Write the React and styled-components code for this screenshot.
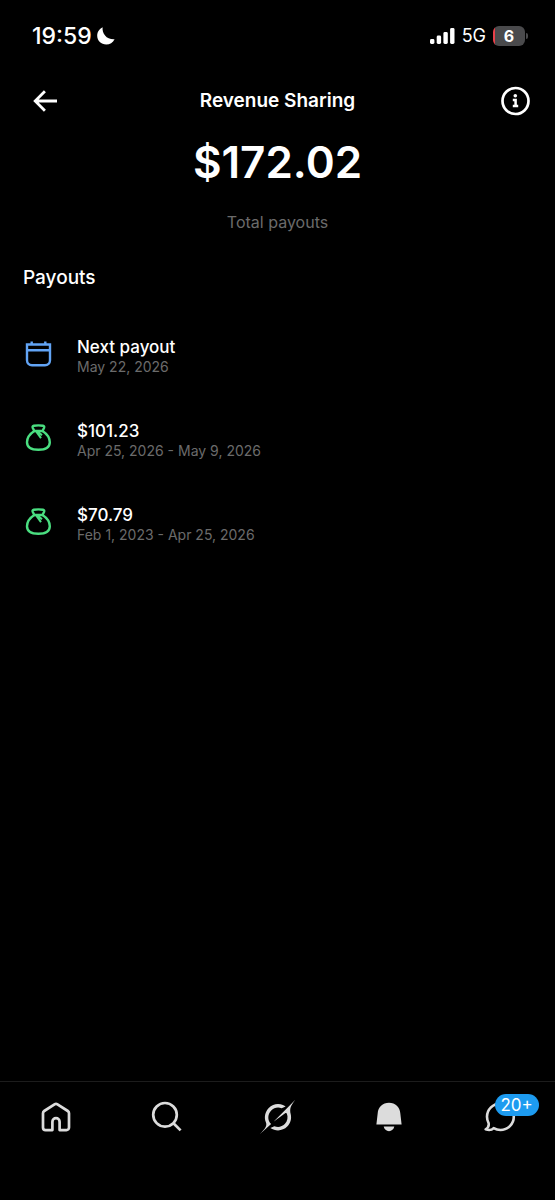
import styled, { createGlobalStyle } from "styled-components";

const GlobalStyle = createGlobalStyle`
  * {
    box-sizing: border-box;
  }
  body {
    margin: 0;
    background: #000;
    color: #fff;
    font-family: Inter, "Liberation Sans", sans-serif;
  }
`;

const Screen = styled.div`
  display: flex;
  flex-direction: column;
  min-height: 100vh;
`;

const StatusBar = styled.div`
  display: flex;
  align-items: center;
  justify-content: space-between;
  height: 72px;
  padding: 0 27px 0 32px;
`;

const StatusGroup = styled.div`
  display: flex;
  align-items: center;
  gap: ${(props) => props.$gap}px;
`;

const Clock = styled.span`
  font-size: 23px;
  font-weight: 500;
  line-height: 24px;
`;

const Network = styled.span`
  font-size: 18px;
  line-height: 24px;
`;

const Battery = styled.div`
  display: flex;
  align-items: center;
  gap: 1px;
`;

const BatteryBody = styled.div`
  width: 32px;
  height: 20px;
  border-radius: 6px;
  background: linear-gradient(to right, #e8404a 2px, #4a4a4c 2px);
  font-size: 16px;
  font-weight: 700;
  line-height: 20px;
  text-align: center;
`;

const BatteryTip = styled.div`
  width: 2px;
  height: 6px;
  border-radius: 0 2px 2px 0;
  background: #4a4a4c;
`;

const Header = styled.header`
  display: grid;
  grid-template-columns: 44px 1fr 44px;
  align-items: center;
  height: 58px;
  padding: 0 24px;
`;

const IconButton = styled.button`
  display: flex;
  align-items: center;
  justify-content: ${(props) => props.$align};
  width: 44px;
  height: 44px;
  padding: 0;
  border: 0;
  background: none;
  color: #fff;
  cursor: pointer;
`;

const Title = styled.h1`
  margin: 0;
  font-size: 19px;
  font-weight: 600;
  line-height: 24px;
  text-align: center;
`;

const Summary = styled.section`
  display: flex;
  flex-direction: column;
  align-items: center;
  gap: 22px;
  padding-top: 6px;
`;

const Amount = styled.strong`
  font-size: 44px;
  font-weight: 600;
  line-height: 52px;
`;

const AmountLabel = styled.span`
  color: #6b6b6b;
  font-size: 16px;
  line-height: 24px;
`;

const Section = styled.main`
  flex: 1;
  padding: 32px 23px;
`;

const SectionTitle = styled.h2`
  margin: 0 0 32px;
  font-size: 19px;
  font-weight: 500;
  line-height: 24px;
`;

const PayoutList = styled.ul`
  display: flex;
  flex-direction: column;
  gap: 20px;
  margin: 0;
  padding: 0;
  list-style: none;
`;

const PayoutRow = styled.li`
  display: flex;
  align-items: center;
  gap: 24px;
  height: 64px;
`;

const PayoutText = styled.div`
  display: flex;
  flex-direction: column;
  padding-top: 5px;
`;

const PayoutTitle = styled.span`
  font-size: 17px;
  font-weight: 500;
  line-height: 20px;
`;

const PayoutDate = styled.span`
  color: #6b6b6b;
  font-size: 14px;
  line-height: 19px;
`;

const TabBar = styled.nav`
  display: grid;
  grid-template-columns: repeat(5, 1fr);
  align-items: start;
  height: 119px;
  padding-top: 16px;
  border-top: 1px solid #1c1c1c;
`;

const Tab = styled.a`
  display: flex;
  align-items: center;
  justify-content: center;
  height: 38px;
  color: #dcdcdc;
`;

const BadgeAnchor = styled.span`
  position: relative;
  display: flex;
`;

const Badge = styled.span`
  position: absolute;
  top: -7px;
  left: 11px;
  height: 22px;
  padding: 0 6px;
  border-radius: 11px;
  background: #1d9bf0;
  color: #fff;
  font-size: 17px;
  line-height: 22px;
`;

const MoonIcon = () => (
  <svg width="20" height="20" viewBox="0 0 20 20" fill="currentColor" aria-hidden="true">
    <path d="M6.6 1.2C5.9 7.6 10.6 13.8 18.6 13.3 16.9 16.8 13.8 18.6 10.3 18.6 5.2 18.6 1.2 14.7 1.2 9.8 1.2 6 3.3 2.7 6.6 1.2Z" />
  </svg>
);

const SignalIcon = () => (
  <svg width="25" height="17" viewBox="0 0 25 17" fill="currentColor" aria-hidden="true">
    <rect x="0" y="11" width="4.4" height="5" rx="1.4" />
    <rect x="6.7" y="7.6" width="4.4" height="8.4" rx="1.4" />
    <rect x="13.4" y="4" width="4.4" height="12" rx="1.4" />
    <rect x="20.1" y="0" width="4.4" height="16" rx="1.4" />
  </svg>
);

const BackIcon = () => (
  <svg width="26" height="24" viewBox="0 0 26 24" fill="none" stroke="currentColor" strokeWidth="2.8" aria-hidden="true">
    <path d="M24 12H2.500M11.900 2.300 2.200 12l9.700 9.700" />
  </svg>
);

const InfoIcon = () => (
  <svg width="30" height="30" viewBox="0 0 30 30" fill="none" aria-hidden="true">
    <circle cx="14.500" cy="15" r="13" stroke="currentColor" strokeWidth="2.7" />
    <circle cx="14.300" cy="9.800" r="1.800" fill="currentColor" />
    <path d="M11.800 14h2.800v5.600M11.800 20h5.400" stroke="currentColor" strokeWidth="2.500" />
  </svg>
);

const CalendarIcon = () => (
  <svg width="30" height="30" viewBox="0 0 30 30" fill="none" stroke="#62a4f5" strokeWidth="2.4" aria-hidden="true">
    <path d="M4 5.5h23v15.800a5 5 0 0 1-5 5H9a5 5 0 0 1-5-5ZM4 11.200h23M8.700 2.400v3M22.300 2.400v3" />
  </svg>
);

const MoneyBagIcon = () => (
  <svg width="30" height="30" viewBox="0 0 30 30" fill="none" stroke="#4ade80" strokeWidth="2.4" strokeLinejoin="round" aria-hidden="true">
    <path d="M11.300 8 9.700 4.700C9.300 3.700 9.800 3 10.800 2.800c3.100-.6 6.100-.6 9.200 0 1 .2 1.500.9 1.100 1.900L19.500 8Z" />
    <path d="M11.300 8C7.600 10.400 4 14.800 4 19.300c0 5.300 4.800 7.500 11.400 7.500s11.400-2.200 11.400-7.500c0-4.500-3.600-8.900-7.300-11.300" />
    <path d="M13.300 8.600l4.700 6.600M14.800 8.600l4.200 3.700" strokeWidth="2" />
  </svg>
);

const HomeIcon = () => (
  <svg width="32" height="32" viewBox="0 0 32 32" fill="none" stroke="currentColor" strokeWidth="2.7" strokeLinejoin="round" aria-hidden="true">
    <path d="M14.500 3.300a2.800 2.800 0 0 1 3 0l10.300 6.700a2.600 2.600 0 0 1 1.200 2.200v14.300a2.600 2.600 0 0 1-2.600 2.600h-6.800v-8.300a3.600 3.600 0 0 0-7.200 0v8.300H5.600A2.600 2.600 0 0 1 3 26.500V12.200a2.600 2.600 0 0 1 1.200-2.200Z" />
  </svg>
);

const SearchIcon = () => (
  <svg width="32" height="32" viewBox="0 0 32 32" fill="none" stroke="currentColor" strokeWidth="2.7" aria-hidden="true">
    <circle cx="14" cy="13.800" r="11.800" />
    <path d="m22.200 22 7.400 7.400" />
  </svg>
);

const GrokIcon = () => (
  <svg width="35" height="34" viewBox="0 0 33 32" fill="currentColor" aria-hidden="true">
    <path d="M12.745 20.54l10.97-8.19c.539-.4 1.307-.244 1.564.38 1.349 3.288.746 7.241-1.938 9.955-2.683 2.714-6.417 3.31-9.83 1.954l-3.728 1.745c5.347 3.697 11.84 2.782 15.898-1.324 3.219-3.255 4.216-7.692 3.284-11.693l.008.009c-1.351-5.878.332-8.227 3.782-13.031L33 0l-4.54 4.59v-.014L12.743 20.544m-2.263 1.987c-3.837-3.707-3.175-9.446.1-12.755 2.42-2.449 6.388-3.448 9.852-1.979l3.72-1.737c-.67-.49-1.53-1.017-2.515-1.387-4.455-1.854-9.789-.931-13.41 2.728-3.483 3.523-4.579 8.94-2.697 13.561 1.405 3.454-.899 5.898-3.22 8.364C1.49 30.2.666 31.074 0 32l10.478-9.466" />
  </svg>
);

const BellIcon = () => (
  <svg width="30" height="30" viewBox="0 0 30 30" fill="currentColor" aria-hidden="true">
    <path d="M15 .8C8.600.8 4.100 5.200 3.700 11.200L2.400 22.600h25.200l-1.300-11.400C25.900 5.200 21.400.8 15 .8ZM9.700 24.600h10.600c-.6 2.800-2.600 4.600-5.300 4.600s-4.700-1.800-5.300-4.600Z" />
  </svg>
);

const ChatIcon = () => (
  <svg width="32" height="32" viewBox="0 0 32 32" fill="none" stroke="currentColor" strokeWidth="2.6" strokeLinejoin="round" aria-hidden="true">
    <path d="M16.500 2.500C9 2.500 3 8.500 3 15.800c0 2.400.6 4.500 1.600 6.400.5 2.300-.3 4.500-2.900 6.100 3.200 1.200 6.200.6 8-1.200 2.100 1.300 4.300 1.900 6.800 1.900 7.400 0 13.300-5.900 13.300-13.200S23.900 2.500 16.500 2.500Z" />
  </svg>
);

const payouts = [
  { icon: CalendarIcon, title: "Next payout", date: "May 22, 2026" },
  { icon: MoneyBagIcon, title: "$101.23", date: "Apr 25, 2026 - May 9, 2026" },
  { icon: MoneyBagIcon, title: "$70.79", date: "Feb 1, 2023 - Apr 25, 2026" },
];

const tabs = [
  { icon: HomeIcon, label: "Home" },
  { icon: SearchIcon, label: "Search" },
  { icon: GrokIcon, label: "Grok" },
  { icon: BellIcon, label: "Notifications" },
  { icon: ChatIcon, label: "Messages", badge: "20+" },
];

const App = () => {
  return (
    <Screen>
      <GlobalStyle />
      <StatusBar>
        <StatusGroup $gap={4}>
          <Clock>19:59</Clock>
          <MoonIcon />
        </StatusGroup>
        <StatusGroup $gap={7}>
          <SignalIcon />
          <Network>5G</Network>
          <Battery>
            <BatteryBody>6</BatteryBody>
            <BatteryTip />
          </Battery>
        </StatusGroup>
      </StatusBar>
      <Header>
        <IconButton type="button" $align="center" aria-label="Back">
          <BackIcon />
        </IconButton>
        <Title>Revenue Sharing</Title>
        <IconButton type="button" $align="flex-end" aria-label="About revenue sharing">
          <InfoIcon />
        </IconButton>
      </Header>
      <Summary>
        <Amount>$172.02</Amount>
        <AmountLabel>Total payouts</AmountLabel>
      </Summary>
      <Section>
        <SectionTitle>Payouts</SectionTitle>
        <PayoutList>
          {payouts.map(({ icon: Icon, title, date }) => (
            <PayoutRow key={title}>
              <Icon />
              <PayoutText>
                <PayoutTitle>{title}</PayoutTitle>
                <PayoutDate>{date}</PayoutDate>
              </PayoutText>
            </PayoutRow>
          ))}
        </PayoutList>
      </Section>
      <TabBar>
        {tabs.map(({ icon: Icon, label, badge }) => (
          <Tab key={label} href="#" aria-label={label}>
            <BadgeAnchor>
              <Icon />
              {badge && <Badge>{badge}</Badge>}
            </BadgeAnchor>
          </Tab>
        ))}
      </TabBar>
    </Screen>
  );
};

export default App;
